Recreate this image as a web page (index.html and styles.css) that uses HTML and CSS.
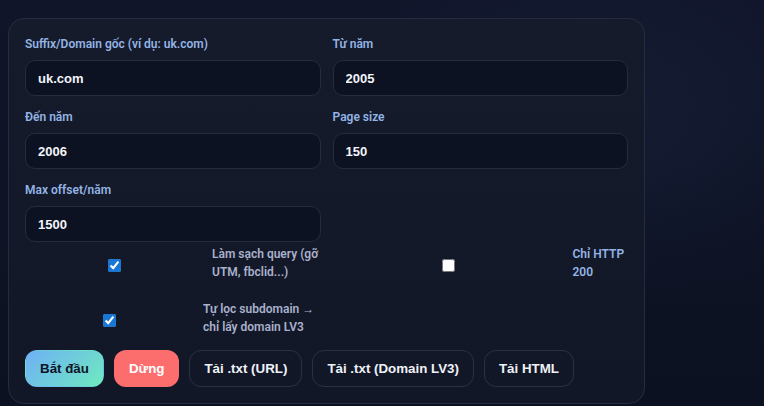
FILE: index.html
```html
<!DOCTYPE html>
<html lang="vi">
<head>
<meta charset="utf-8">
<title>Domain crawler</title>
<link rel="stylesheet" href="styles.css">
</head>
<body>
<div class="card">
  <div class="fields">
    <div class="field">
      <label class="label">Suffix/Domain gốc (ví dụ: uk.com)</label>
      <input class="input" type="text" value="uk.com">
    </div>
    <div class="field">
      <label class="label">Từ năm</label>
      <input class="input" type="text" value="2005">
    </div>
    <div class="field">
      <label class="label">Đến năm</label>
      <input class="input" type="text" value="2006">
    </div>
    <div class="field">
      <label class="label">Page size</label>
      <input class="input" type="text" value="150">
    </div>
    <div class="field">
      <label class="label">Max offset/năm</label>
      <input class="input" type="text" value="1500">
    </div>
  </div>

  <div class="checks">
    <label class="check check-clean">
      <input type="checkbox" checked>
      <span class="check-text">Làm sạch query (gỡ UTM, fbclid...)</span>
    </label>
    <label class="check check-http">
      <input type="checkbox">
      <span class="check-text alt">Chỉ HTTP 200</span>
    </label>
    <label class="check check-sub">
      <input type="checkbox" checked>
      <span class="check-text">Tự lọc subdomain → chỉ lấy domain LV3</span>
    </label>
  </div>

  <div class="actions">
    <button class="btn btn-primary">Bắt đầu</button>
    <button class="btn btn-danger">Dừng</button>
    <button class="btn btn-ghost">Tải .txt (URL)</button>
    <button class="btn btn-ghost">Tải .txt (Domain LV3)</button>
    <button class="btn btn-ghost">Tải HTML</button>
  </div>
</div>
</body>
</html>
```
FILE: styles.css
```css
* { box-sizing: border-box; }

html, body { height: 100%; }

body {
  margin: 0;
  padding: 18px 0 0 8px;
  background:
    radial-gradient(ellipse 420px 260px at 78% 30%, rgba(40, 52, 84, 0.25), transparent 70%),
    linear-gradient(180deg, #10152a 0%, #0c1121 100%);
  font-family: "Segoe UI", Roboto, "Noto Sans", sans-serif;
  color: #e6ecf6;
}

.card {
  width: 637px;
  padding: 16px;
  border: 1px solid #262c3e;
  border-radius: 16px;
  background: linear-gradient(180deg, #161b2c 0%, #121727 100%);
}

.fields {
  display: grid;
  grid-template-columns: 1fr 1fr;
  column-gap: 12px;
  row-gap: 12px;
}

.field {
  display: flex;
  flex-direction: column;
}

.label {
  font-size: 12px;
  line-height: 18px;
  font-weight: 600;
  color: #93b4e4;
  margin-bottom: 7px;
}

.input {
  height: 36px;
  padding: 0 12px;
  border: 1px solid #262c3e;
  border-radius: 10px;
  background: #0d1222;
  color: #f2f5fb;
  font-family: "Liberation Sans", Arial, sans-serif;
  font-size: 13px;
  font-weight: 700;
  outline: none;
}

.checks {
  display: grid;
  grid-template-columns: 1fr 1fr;
  column-gap: 12px;
  row-gap: 19px;
  margin-top: 3px;
}

.check {
  display: grid;
  align-items: center;
  min-height: 36px;
}

.check input {
  margin: 5px 0 0 0;
  width: 13px;
  height: 13px;
  justify-self: center;
  accent-color: #1976d2;
}

.check-clean { grid-template-columns: 179px 1fr; column-gap: 8px; }
.check-http  { grid-template-columns: 231px 1fr; column-gap: 9px; }
.check-sub   { grid-template-columns: 169px 1fr; column-gap: 9px; }

.check-text {
  font-size: 12px;
  line-height: 18px;
  font-weight: 600;
  color: #a9b1cc;
}

.check-text.alt { color: #93b4e4; }

.actions {
  display: flex;
  gap: 10px;
  margin-top: 14px;
}

.btn {
  height: 37px;
  padding: 0 14px;
  border-radius: 12px;
  border: 1px solid transparent;
  font-family: "Liberation Sans", Arial, sans-serif;
  font-size: 13.333px;
  font-weight: 700;
  cursor: pointer;
}

.btn-primary {
  background: linear-gradient(135deg, #6fb0f6 0%, #6eeabf 100%);
  color: #0e1526;
}

.btn-danger {
  background: #fc6e6e;
  color: #ffffff;
}

.btn-ghost {
  background: transparent;
  border-color: #2a3144;
  color: #eef2f8;
}
```
